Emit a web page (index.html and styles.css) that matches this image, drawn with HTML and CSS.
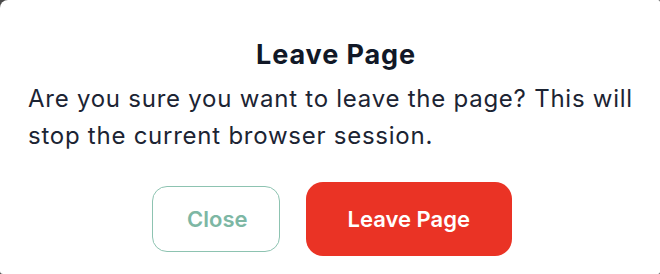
FILE: index.html
```html
<!DOCTYPE html>
<html lang="en">
<head>
<meta charset="utf-8">
<title>Leave Page</title>
<link rel="stylesheet" href="styles.css">
</head>
<body>
<div class="modal" role="dialog" aria-labelledby="modal-title">
  <h2 class="modal-title" id="modal-title">Leave Page</h2>
  <p class="modal-text">Are you sure you want to leave the page? This will stop the current browser session.</p>
  <div class="modal-actions">
    <button class="btn btn-outline" type="button">Close</button>
    <button class="btn btn-danger" type="button">Leave Page</button>
  </div>
</div>
</body>
</html>
```
FILE: styles.css
```css
* { box-sizing: border-box; }
html, body {
  margin: 0;
  padding: 0;
  width: 660px;
  height: 274px;
  background: #4a4a4a;
  overflow: hidden;
}
body {
  font-family: Inter, "Noto Sans", sans-serif;
}
.modal {
  width: 660px;
  height: 274px;
  background: #ffffff;
  border-radius: 8px 2px 2px 3px;
  padding: 38px 16px 0 28px;
}
.modal-title {
  margin: 0;
  text-align: center;
  font-size: 27px;
  line-height: 34px;
  font-weight: 700;
  color: #111827;
  letter-spacing: 0.9px;
}
.modal-text {
  margin: 8px 0 0;
  font-size: 24px;
  line-height: 37px;
  font-weight: 400;
  color: #1c2433;
  letter-spacing: 0.75px;
}
.modal-actions {
  margin-top: 28px;
  padding-right: 8px;
  display: flex;
  justify-content: center;
  align-items: center;
  gap: 26px;
}
.btn {
  font-family: Inter, "Noto Sans", sans-serif;
  font-size: 22px;
  font-weight: 600;
  cursor: pointer;
  display: flex;
  align-items: center;
  justify-content: center;
}
.btn-outline {
  height: 66px;
  padding: 0 31px 0 34px;
  background: #ffffff;
  border: 1px solid #8dc3b1;
  border-radius: 15px;
  color: #7db7a4;
}
.btn-danger {
  height: 74px;
  padding: 0 42px;
  background: #ea3325;
  border: none;
  border-radius: 17px;
  color: #ffffff;
}
```
